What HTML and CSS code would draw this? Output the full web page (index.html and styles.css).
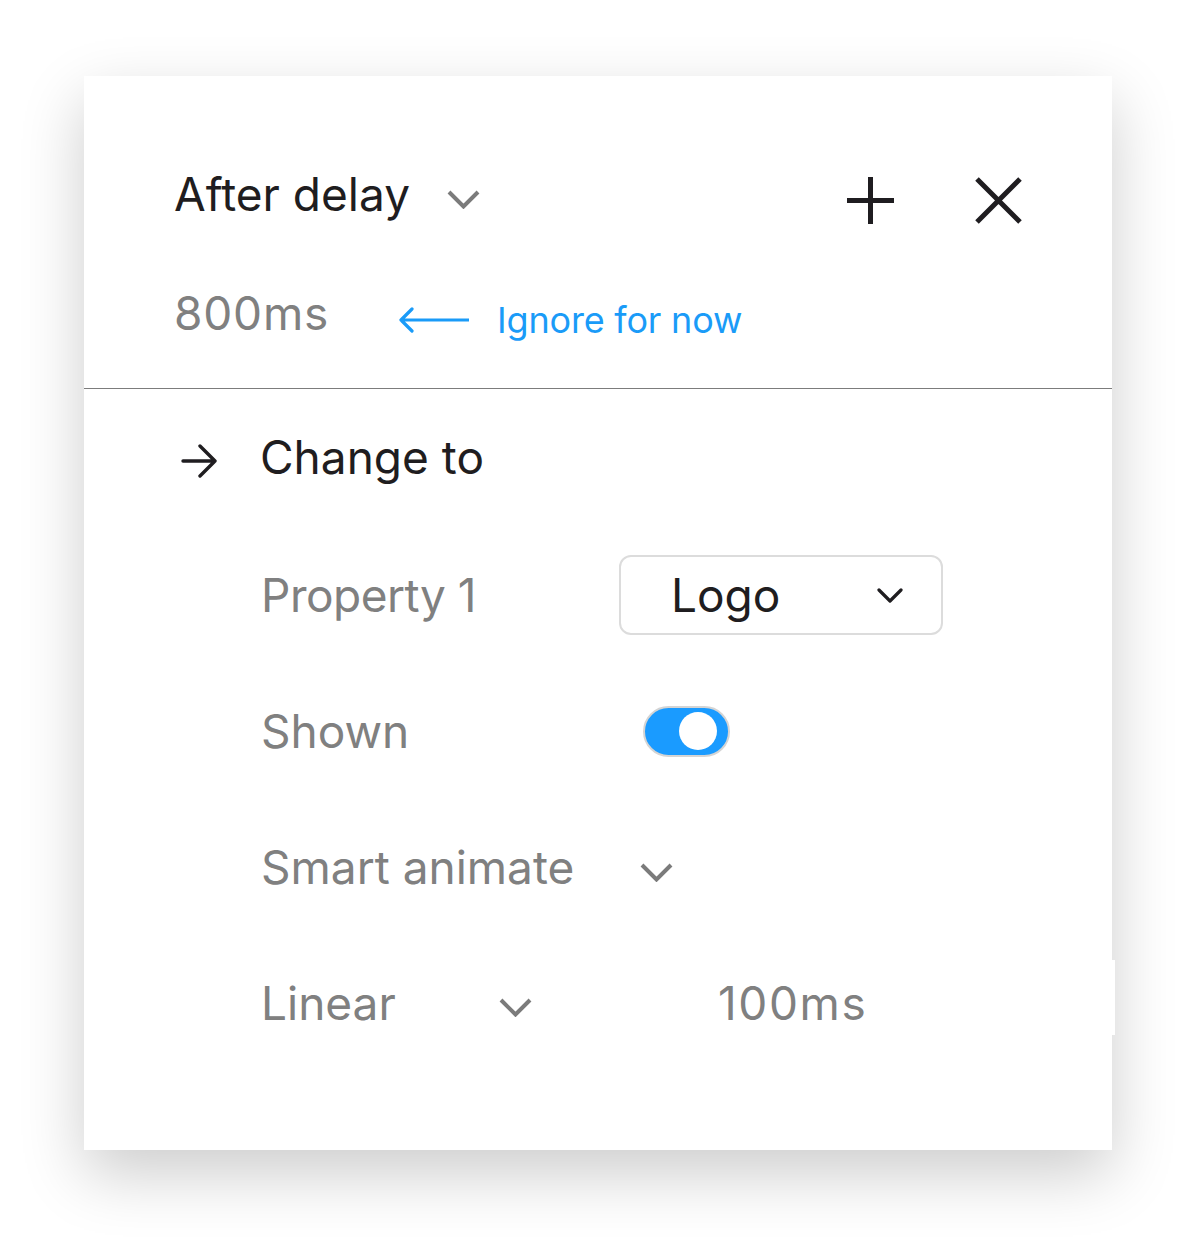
FILE: index.html
```html
<!DOCTYPE html>
<html lang="en">
<head>
  <meta charset="UTF-8">
  <title>Interaction</title>
  <link rel="stylesheet" href="styles.css">
</head>
<body>

  <div class="panel">
    <!-- trigger -->
    <div class="trigger">
      <div class="row head-row">
        <span class="title">After delay</span>
        <svg class="chev chev-gray" width="33" height="19" viewBox="0 0 33 19"><path d="M2 2 L16.5 16.5 L31 2" fill="none" stroke="#7b7b7b" stroke-width="4"/></svg>
        <div class="actions">
          <svg width="47" height="47" viewBox="0 0 47 47"><path d="M23.5 0 V47 M0 23.5 H47" stroke="#1f1d20" stroke-width="5"/></svg>
          <svg width="47" height="47" viewBox="0 0 47 47"><path d="M2 2 L45 45 M45 2 L2 45" stroke="#1f1d20" stroke-width="5"/></svg>
        </div>
      </div>
      <div class="row delay-row">
        <span class="delay">800ms</span>
        <svg class="back-arrow" width="70" height="26" viewBox="0 0 70 26"><path d="M2 13 H70 M13 2 L2 13 L13 24" fill="none" stroke="#1a9bf8" stroke-width="3.2" stroke-linecap="round" stroke-linejoin="round"/></svg>
        <span class="hint">Ignore for now</span>
      </div>
    </div>

    <!-- action -->
    <div class="action">
      <div class="row action-row">
        <svg class="go-arrow" width="37" height="34" viewBox="0 0 37 34"><path d="M2 17 H34 M19 2 L34 17 L19 32" fill="none" stroke="#1f1d20" stroke-width="3.4" stroke-linecap="round" stroke-linejoin="round"/></svg>
        <span class="title">Change to</span>
      </div>

      <div class="props">
        <div class="prop-row">
          <span class="prop-label tight">Property 1</span>
          <div class="select">
            <span>Logo</span>
            <svg width="26" height="15" viewBox="0 0 26 15"><path d="M2 2 L13 13 L24 2" fill="none" stroke="#1f1d20" stroke-width="3.2" stroke-linecap="round" stroke-linejoin="round"/></svg>
          </div>
        </div>
        <div class="prop-row">
          <span class="prop-label">Shown</span>
          <div class="toggle"><span class="knob"></span></div>
        </div>
        <div class="prop-row">
          <span class="prop-label">Smart animate</span>
          <svg class="chev value-chev" width="33" height="19" viewBox="0 0 33 19"><path d="M2 2 L16.5 16.5 L31 2" fill="none" stroke="#7b7b7b" stroke-width="4"/></svg>
        </div>
        <div class="prop-row">
          <span class="prop-label">
            Linear
            <svg class="chev ease-chev" width="33" height="19" viewBox="0 0 33 19"><path d="M2 2 L16.5 16.5 L31 2" fill="none" stroke="#7b7b7b" stroke-width="4"/></svg>
          </span>
          <span class="duration">100ms</span>
        </div>
      </div>
    </div>
  </div>

</body>
</html>
```

FILE: styles.css
```css
body {
  margin: 0;
  padding: 76px 0 91px 84px;
  background: #fff;
  font-family: Inter, "Open Sans", sans-serif;
  color: #1f1d20;
}
.panel {
  position: relative;
  width: 1028px;
  height: 1074px;
  background: #fff;
  box-shadow: 0 24px 60px rgba(0,0,0,0.2);
}
/* little white sliver on the right edge */
.panel::after {
  content: "";
  position: absolute;
  right: -3px;
  top: 884px;
  width: 3px;
  height: 75px;
  background: #fff;
}
.row {
  display: flex;
  align-items: center;
}
.trigger {
  padding: 90px 90px 38px 90px;
  border-bottom: 1px solid #7c7c7c;
}
.head-row {
  height: 68px;
}
.title {
  font-size: 46px;
  line-height: 1;
  color: #1f1d20;
}
.head-row .title {
  margin-bottom: 12px;
}
.chev-gray {
  margin-left: 37px;
  margin-bottom: 2px;
}
.actions {
  margin-left: auto;
  display: flex;
  gap: 81px;
}
.delay-row {
  height: 68px;
  margin-top: 48px;
}
.delay {
  font-size: 46px;
  line-height: 1;
  color: #808080;
  letter-spacing: 0.8px;
  margin-bottom: 6px;
}
.back-arrow {
  margin-left: 70px;
  margin-top: 8px;
}
.hint {
  margin-left: 28px;
  margin-top: 8px;
  font-size: 36px;
  line-height: 1;
  color: #1a9bf8;
  letter-spacing: -0.2px;
}
.action {
  padding: 42px 92px 0 97px;
}
.action-row {
  height: 60px;
}
.action-row .title {
  margin-bottom: 8px;
}
.go-arrow {
  margin-right: 42px;
}
.props {
  margin-top: 64px;
  padding-left: 80px;
  display: flex;
  flex-direction: column;
  gap: 56px;
}
.prop-row {
  display: flex;
  align-items: center;
  height: 80px;
}
.prop-label {
  width: 358px;
  display: flex;
  align-items: center;
  font-size: 46px;
  line-height: 1;
  color: #808080;
}
.tight {
  letter-spacing: -0.5px;
}
.select {
  width: 324px;
  height: 80px;
  box-sizing: border-box;
  border: 2px solid #dcdcdc;
  border-radius: 12px;
  display: flex;
  align-items: center;
  padding: 0 38px 0 50px;
  justify-content: space-between;
  font-size: 46px;
  color: #1f1d20;
}
.toggle {
  position: relative;
  margin-left: 24px;
  width: 87px;
  height: 51px;
  box-sizing: border-box;
  border: 2px solid #d4d4d4;
  border-radius: 26px;
  background: #1a9bff;
}
.knob {
  position: absolute;
  right: 11px;
  top: 4.5px;
  width: 38px;
  height: 38px;
  border-radius: 50%;
  background: #fff;
}
.value-chev {
  margin-left: 21px;
  margin-top: 10px;
}
.ease-chev {
  margin-left: 103px;
  margin-top: 8px;
}
.duration {
  margin-left: 99px;
  font-size: 46px;
  line-height: 1;
  color: #808080;
  letter-spacing: 1.6px;
}
```
